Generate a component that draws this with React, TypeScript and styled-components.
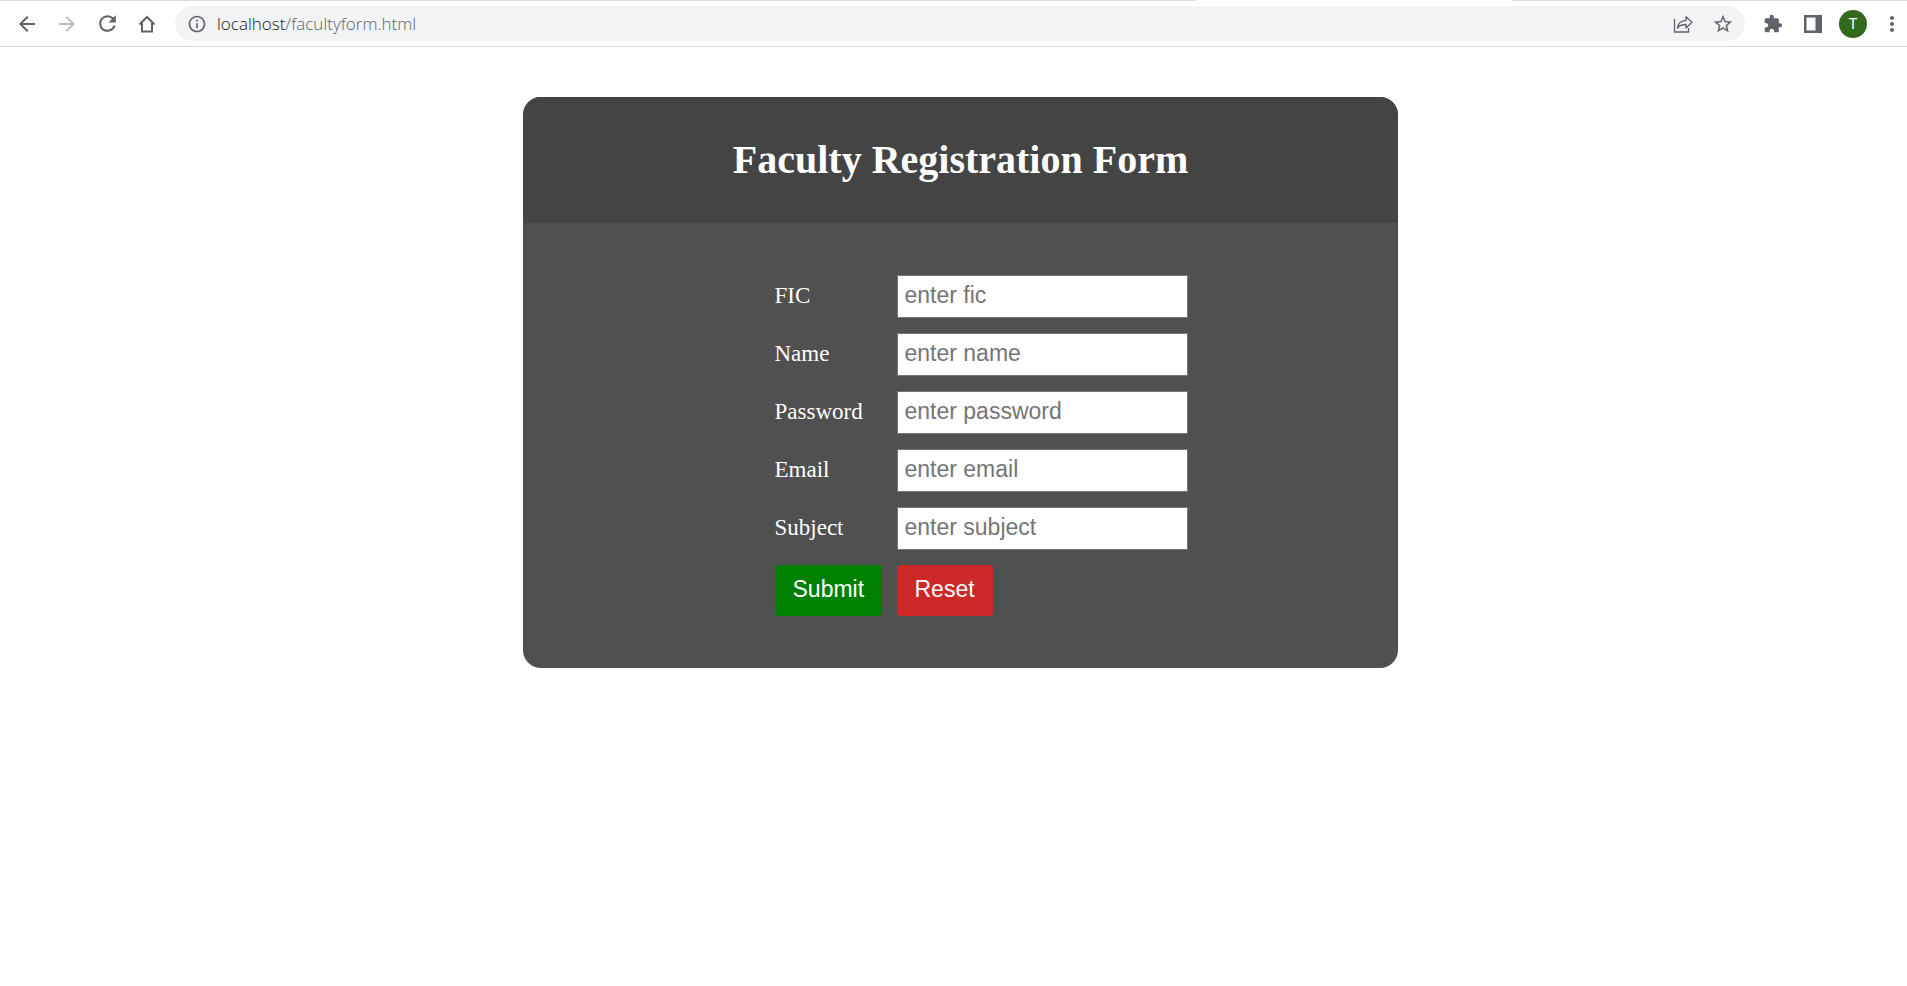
import React from "react";
import styled, { createGlobalStyle } from "styled-components";

const GlobalStyle = createGlobalStyle`
  *, *::before, *::after { box-sizing: border-box; }
  body {
    margin: 0;
    background: #fff;
    font-family: "Liberation Serif", "Times New Roman", serif;
  }
`;

const TabEdge = styled.div`
  display: grid;
  grid-template-columns: 1196fr 317fr 394fr;
  height: 1px;
`;

const EdgeLine = styled.span`
  background: #dadce0;
  &:nth-child(2) { background: #fff; }
`;

const Toolbar = styled.header`
  display: flex;
  align-items: center;
  height: 46px;
  padding-left: 7px;
  border-bottom: 1px solid #d9d9db;
  background: #fff;
`;

const IconButton = styled.button<{ $dim?: boolean }>`
  display: flex;
  align-items: center;
  justify-content: center;
  flex: none;
  width: 40px;
  height: 36px;
  padding: 0;
  border: 0;
  background: transparent;
  color: ${(p) => (p.$dim ? "#babcbe" : "#5f6368")};
`;

const MenuButton = styled(IconButton)`
  width: 30px;
  margin-left: 4px;
`;

const AddressBar = styled.div`
  display: flex;
  align-items: center;
  flex: 1;
  min-width: 0;
  height: 35px;
  margin: 0 8px;
  padding: 0 2px 0 12px;
  border-radius: 18px;
  background: #f1f3f4;
`;

const SiteInfo = styled(IconButton)`
  width: 20px;
`;

const Address = styled.div`
  flex: 1;
  min-width: 0;
  padding-left: 10px;
  overflow: hidden;
  outline: none;
  white-space: nowrap;
  font: 350 17px/24px "Open Sans", "Noto Sans", sans-serif;
  color: #5f6368;
`;

const Host = styled.span`
  color: #202124;
`;

const Avatar = styled.span`
  display: flex;
  align-items: center;
  justify-content: center;
  width: 28px;
  height: 28px;
  border-radius: 50%;
  background: #33691e;
  color: #fff;
  font: 15px/28px Roboto, sans-serif;
`;

const Page = styled.main`
  padding: 50px 0 50px 14px;
`;

const Card = styled.section`
  width: 100%;
  max-width: 875px;
  margin: 0 auto;
  overflow: hidden;
  border-radius: 18px;
  background: #505050;
  color: #fff;
`;

const CardHeader = styled.header`
  padding: 40px 0;
  background: #444;
  text-align: center;
`;

const Title = styled.h1`
  margin: 0;
  font-size: 40px;
  line-height: 46px;
`;

const Form = styled.form`
  display: grid;
  grid-template-columns: 107px 291px;
  gap: 15px;
  justify-content: center;
  padding: 52px 0 52px 41px;
`;

const Label = styled.label`
  padding-bottom: 2px;
  font-size: 23px;
  line-height: 41px;
`;

const Field = styled.input`
  width: 100%;
  height: 43px;
  padding: 0 7px 3px;
  border: 1px solid #767676;
  border-radius: 0;
  background: #fff;
  color: #000;
  font: 23px "Liberation Sans", Arial, sans-serif;
  &::placeholder { color: #757575; }
`;

const ActionButton = styled.button<{ $color: string }>`
  justify-self: start;
  height: 51px;
  padding: 0 18px 3px;
  border: 0;
  border-radius: 4px;
  background: ${(p) => p.$color};
  color: #fff;
  font: 23px "Liberation Sans", Arial, sans-serif;
`;

function Glyph({ d, size = 24 }: { d: string; size?: number }) {
  return (
    <svg width={size} height={size} viewBox="0 0 24 24" fill="currentColor" aria-hidden="true">
      <path d={d} />
    </svg>
  );
}

function HomeIcon() {
  return (
    <svg width="18" height="18" viewBox="0 0 18 18" fill="none" stroke="currentColor" strokeWidth="2" aria-hidden="true">
      <path d="M1.500 9.500 9 2l7.500 7.500M4 8v8.500h10V8" />
    </svg>
  );
}

function ShareIcon() {
  return (
    <svg width="20" height="20" viewBox="0 0 20 20" fill="none" stroke="currentColor" strokeWidth="1.300" aria-hidden="true">
      <path d="M1.500 5v13H15.500v-4" />
      <path d="M4.500 14c.5-4.800 3.200-7.200 8.500-7.400V2.600l6 5.700-6 5.700v-3.500c-3.500 0-6.500.9-8.500 3.500z" strokeLinejoin="round" />
    </svg>
  );
}

function SidePanelIcon() {
  return (
    <svg width="18" height="18" viewBox="0 0 18 18" fill="currentColor" aria-hidden="true">
      <path fillRule="evenodd" d="M0 0h18v18H0zM2.500 2.500v13H11.500v-13z" />
    </svg>
  );
}

const BACK = "M20 11H7.830l5.590-5.590L12 4l-8 8 8 8 1.410-1.410L7.830 13H20v-2z";
const FORWARD = "M4 13h12.170l-5.590 5.590L12 20l8-8-8-8-1.410 1.410L16.170 11H4v2z";
const RELOAD =
  "M17.650 6.350C16.200 4.900 14.210 4 12 4c-4.420 0-7.990 3.580-7.990 8s3.570 8 7.990 8c3.730 0 6.840-2.550 7.730-6h-2.080c-.82 2.330-3.040 4-5.650 4-3.310 0-6-2.690-6-6s2.690-6 6-6c1.660 0 3.140.69 4.220 1.780L13 11h7V4l-2.350 2.350z";
const INFO =
  "M11 7h2v2h-2zm0 4h2v6h-2zm1-9C6.480 2 2 6.480 2 12s4.480 10 10 10 10-4.480 10-10S17.520 2 12 2zm0 18c-4.410 0-8-3.590-8-8s3.590-8 8-8 8 3.590 8 8-3.590 8-8 8z";
const STAR =
  "M22 9.240l-7.190-.62L12 2 9.190 8.630 2 9.240l5.460 4.730L5.820 21 12 17.270 18.180 21l-1.630-7.030L22 9.240zM12 15.400l-3.760 2.270 1-4.280-3.320-2.880 4.380-.38L12 6.100l1.710 4.040 4.380.38-3.320 2.880 1 4.280L12 15.400z";
const PUZZLE =
  "M20.500 11H19V7c0-1.100-.9-2-2-2h-4V3.500C13 2.120 11.880 1 10.500 1S8 2.120 8 3.500V5H4c-1.100 0-1.990.9-1.990 2v3.800H3.500c1.490 0 2.700 1.210 2.700 2.700s-1.210 2.700-2.700 2.700H2V20c0 1.100.9 2 2 2h3.800v-1.500c0-1.490 1.210-2.700 2.700-2.700s2.700 1.210 2.700 2.700V22H17c1.100 0 2-.9 2-2v-4h1.500c1.380 0 2.500-1.120 2.500-2.500S21.880 11 20.500 11z";
const MORE =
  "M12 8c1.100 0 2-.9 2-2s-.9-2-2-2-2 .9-2 2 .9 2 2 2zm0 2c-1.100 0-2 .9-2 2s.9 2 2 2 2-.9 2-2-.9-2-2-2zm0 6c-1.100 0-2 .9-2 2s.9 2 2 2 2-.9 2-2-.9-2-2-2z";

const fields = [
  { id: "fic", label: "FIC", type: "text" },
  { id: "name", label: "Name", type: "text" },
  { id: "password", label: "Password", type: "password" },
  { id: "email", label: "Email", type: "email" },
  { id: "subject", label: "Subject", type: "text" },
];

export default function App() {
  return (
    <>
      <GlobalStyle />
      <TabEdge>
        <EdgeLine />
        <EdgeLine />
        <EdgeLine />
      </TabEdge>
      <Toolbar>
        <IconButton aria-label="Back"><Glyph d={BACK} /></IconButton>
        <IconButton aria-label="Forward" $dim><Glyph d={FORWARD} /></IconButton>
        <IconButton aria-label="Reload"><Glyph d={RELOAD} size={25} /></IconButton>
        <IconButton aria-label="Home"><HomeIcon /></IconButton>
        <AddressBar>
          <SiteInfo aria-label="Site information"><Glyph d={INFO} size={20} /></SiteInfo>
          <Address role="textbox" aria-label="Address" contentEditable suppressContentEditableWarning spellCheck={false}>
            <Host>localhost</Host>/facultyform.html
          </Address>
          <IconButton aria-label="Share"><ShareIcon /></IconButton>
          <IconButton aria-label="Bookmark"><Glyph d={STAR} size={22} /></IconButton>
        </AddressBar>
        <IconButton aria-label="Extensions"><Glyph d={PUZZLE} size={20} /></IconButton>
        <IconButton aria-label="Side panel"><SidePanelIcon /></IconButton>
        <IconButton aria-label="Profile"><Avatar>T</Avatar></IconButton>
        <MenuButton aria-label="Menu"><Glyph d={MORE} /></MenuButton>
      </Toolbar>
      <Page>
        <Card>
          <CardHeader>
            <Title>Faculty Registration Form</Title>
          </CardHeader>
          <Form onSubmit={(e) => e.preventDefault()}>
            {fields.map((f) => (
              <React.Fragment key={f.id}>
                <Label htmlFor={f.id}>{f.label}</Label>
                <Field id={f.id} name={f.id} type={f.type} placeholder={`enter ${f.id}`} />
              </React.Fragment>
            ))}
            <ActionButton type="submit" $color="#008000">Submit</ActionButton>
            <ActionButton type="reset" $color="#cd2828">Reset</ActionButton>
          </Form>
        </Card>
      </Page>
    </>
  );
}
